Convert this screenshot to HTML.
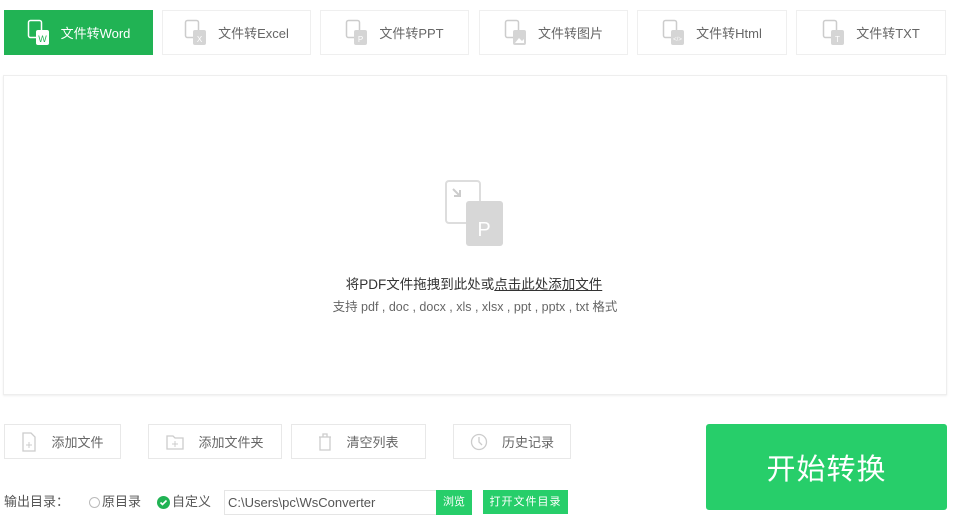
<!DOCTYPE html>
<html><head><meta charset="utf-8"><style>
*{box-sizing:border-box;margin:0;padding:0}
body{width:957px;height:527px;background:#fff;font-family:"Liberation Sans","Noto Sans CJK SC",sans-serif;position:relative;overflow:hidden;color:#555}
.tab{position:absolute;top:10px;height:45px;border:1px solid #efefef;display:flex;align-items:center;justify-content:center;font-size:13px;color:#666;background:#fff}
.tab svg{margin-right:10px}
.tab.on{background:#21b354;color:#fff;border-color:#21b354}
.box{position:absolute;left:3px;top:75px;width:944px;height:320px;border:1px solid #eee;box-shadow:0 1px 2px #eee}
.btn{position:absolute;top:424px;height:35px;border:1px solid #e8e8e8;display:flex;align-items:center;justify-content:center;font-size:13px;color:#666}
.btn svg{margin-right:14px}
.big{position:absolute;left:706px;top:424px;width:241px;height:86px;background:#27ce6a;border-radius:3px;color:#fff;font-size:29px;display:flex;align-items:center;justify-content:center;letter-spacing:1px}
.row{position:absolute;top:490px;font-size:13px;color:#555;line-height:24px}
</style></head><body>
<div class="tab on" style="left:4px;width:149px"><svg width="24" height="28" viewBox="0 0 24 28"><rect x="1.5" y="1.5" width="13" height="17" rx="2" fill="none" stroke="#fff" stroke-width="1.5"/><rect x="9" y="11" width="13" height="15" rx="2" fill="#fff"/><text x="15.5" y="23" font-size="9" fill="#21b354" text-anchor="middle">W</text></svg>文件转Word</div>
<div class="tab" style="left:162px;width:149px"><svg width="24" height="28" viewBox="0 0 24 28"><rect x="1.5" y="1.5" width="13" height="17" rx="2" fill="none" stroke="#ccc" stroke-width="1.5"/><rect x="9" y="11" width="13" height="15" rx="2" fill="#d5d5d5"/><text x="15.5" y="23" font-size="8" fill="#fff" text-anchor="middle">X</text></svg>文件转Excel</div>
<div class="tab" style="left:320px;width:149px"><svg width="24" height="28" viewBox="0 0 24 28"><rect x="1.5" y="1.5" width="13" height="17" rx="2" fill="none" stroke="#ccc" stroke-width="1.5"/><rect x="9" y="11" width="13" height="15" rx="2" fill="#d5d5d5"/><text x="15.5" y="23" font-size="8" fill="#fff" text-anchor="middle">P</text></svg>文件转PPT</div>
<div class="tab" style="left:479px;width:149px"><svg width="24" height="28" viewBox="0 0 24 28"><rect x="1.5" y="1.5" width="13" height="17" rx="2" fill="none" stroke="#ccc" stroke-width="1.5"/><rect x="9" y="11" width="13" height="15" rx="2" fill="#d5d5d5"/><path d="M11 24l4-5 3 3 2-2v4z" fill="#fff"/></svg>文件转图片</div>
<div class="tab" style="left:637px;width:150px"><svg width="24" height="28" viewBox="0 0 24 28"><rect x="1.5" y="1.5" width="13" height="17" rx="2" fill="none" stroke="#ccc" stroke-width="1.5"/><rect x="9" y="11" width="13" height="15" rx="2" fill="#d5d5d5"/><text x="15.5" y="22" font-size="6" fill="#fff" text-anchor="middle">&lt;/&gt;</text></svg>文件转Html</div>
<div class="tab" style="left:796px;width:150px"><svg width="24" height="28" viewBox="0 0 24 28"><rect x="1.5" y="1.5" width="13" height="17" rx="2" fill="none" stroke="#ccc" stroke-width="1.5"/><rect x="9" y="11" width="13" height="15" rx="2" fill="#d5d5d5"/><text x="15.5" y="23" font-size="8" fill="#fff" text-anchor="middle">T</text></svg>文件转TXT</div>
<div class="box"></div>
<svg style="position:absolute;left:444px;top:179px" width="62" height="70" viewBox="0 0 62 70"><rect x="2" y="2" width="34" height="42" rx="3" fill="#fff" stroke="#ddd" stroke-width="2"/><path d="M9 10l7 7M16 11v6h-6" stroke="#ccc" stroke-width="2" fill="none"/><rect x="22" y="22" width="37" height="45" rx="3" fill="#d7d7d7"/><text x="40" y="57" font-size="20" fill="#fff" text-anchor="middle" font-family="Liberation Sans">P</text></svg>
<div style="position:absolute;left:0;width:948px;top:273px;text-align:center;font-size:13.5px;color:#333">将PDF文件拖拽到此处或<span style="text-decoration:underline">点击此处添加文件</span></div>
<div style="position:absolute;left:0;width:950px;top:296px;text-align:center;font-size:12.5px;color:#666">支持 pdf , doc , docx , xls , xlsx , ppt , pptx , txt 格式</div>
<div class="btn" style="left:4px;width:117px"><svg width="16" height="20"><path d="M2 1h8l4 4v14H2z" fill="none" stroke="#ccc" stroke-width="1.3"/><path d="M8 10v6M5 13h6" stroke="#ccc"/></svg>添加文件</div>
<div class="btn" style="left:148px;width:134px"><svg width="18" height="16"><path d="M1 2h6l2 2h8v11H1z" fill="none" stroke="#ccc" stroke-width="1.3"/><path d="M9 7v6M6 10h6" stroke="#ccc"/></svg>添加文件夹</div>
<div class="btn" style="left:291px;width:135px"><svg width="14" height="18"><path d="M1 4h12M5 4V1h4v3M2 4v13h10V4" fill="none" stroke="#ccc" stroke-width="1.3"/></svg>清空列表</div>
<div class="btn" style="left:453px;width:118px"><svg width="18" height="18"><circle cx="9" cy="9" r="7.5" fill="none" stroke="#ccc" stroke-width="1.3"/><path d="M9 4v5l3 3" fill="none" stroke="#ccc" stroke-width="1.3"/></svg>历史记录</div>
<div class="big">开始转换</div>
<div class="row" style="left:4px">输出目录：</div>
<div class="row" style="left:89px;display:flex;align-items:center"><span style="width:11px;height:11px;border:1px solid #bbb;border-radius:50%;display:inline-block;margin-right:2px"></span>原目录</div>
<div class="row" style="left:157px;display:flex;align-items:center"><svg width="13" height="13" style="margin-right:2px"><circle cx="6.5" cy="6.5" r="6.5" fill="#21b354"/><path d="M3.5 6.5l2 2 4-4" stroke="#fff" stroke-width="1.6" fill="none"/></svg>自定义</div>
<div style="position:absolute;left:224px;top:490px;width:213px;height:25px;border:1px solid #e5e5e5;font-size:13px;color:#555;line-height:23px;padding-left:3px">C:\Users\pc\WsConverter</div>
<div style="position:absolute;left:436px;top:490px;width:36px;height:25px;background:#27ce6a;color:#fff;font-size:11px;line-height:25px;text-align:center">浏览</div>
<div style="position:absolute;left:483px;top:490px;width:85px;height:24px;background:#27ce6a;color:#fff;font-size:11px;line-height:24px;text-align:center;letter-spacing:1px">打开文件目录</div>
</body></html>
